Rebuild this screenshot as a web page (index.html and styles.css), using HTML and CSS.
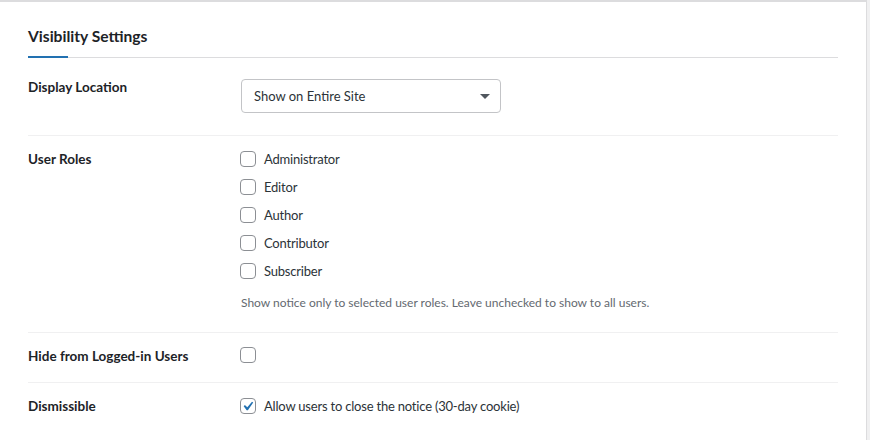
FILE: index.html
```html
<!DOCTYPE html>
<html lang="en">
<head>
<meta charset="utf-8">
<title>Visibility Settings</title>
<link rel="stylesheet" href="styles.css">
</head>
<body>
<div class="card">
  <h2 class="card-title">Visibility Settings</h2>

  <div class="row row-select">
    <div class="row-label">Display Location</div>
    <div class="row-field">
      <div class="select-wrap">
        <select class="select">
          <option>Show on Entire Site</option>
        </select>
      </div>
    </div>
  </div>

  <div class="row">
    <div class="row-label">User Roles</div>
    <div class="row-field">
      <div class="check-list">
        <label class="check"><input type="checkbox"><span class="box"></span>Administrator</label>
        <label class="check"><input type="checkbox"><span class="box"></span>Editor</label>
        <label class="check"><input type="checkbox"><span class="box"></span>Author</label>
        <label class="check"><input type="checkbox"><span class="box"></span>Contributor</label>
        <label class="check"><input type="checkbox"><span class="box"></span>Subscriber</label>
      </div>
      <p class="help">Show notice only to selected user roles. Leave unchecked to show to all users.</p>
    </div>
  </div>

  <div class="row">
    <div class="row-label">Hide from Logged-in Users</div>
    <div class="row-field">
      <label class="check solo"><input type="checkbox"><span class="box"></span></label>
    </div>
  </div>

  <div class="row">
    <div class="row-label">Dismissible</div>
    <div class="row-field">
      <label class="check"><input type="checkbox" checked><span class="box is-checked"><svg viewBox="2.86 1.9 15.24 15.24" width="14" height="14" aria-hidden="true"><path d="M14.83 4.89l1.34.94-5.81 8.38H9.02L5.78 9.67l1.34-1.25 2.57 2.4z" fill="#2271b1"/></svg></span>Allow users to close the notice (30-day cookie)</label>
    </div>
  </div>
</div>
</body>
</html>
```

FILE: styles.css
```css
html, body {
  margin: 0;
  padding: 0;
}

body {
  background: #f0f0f1;
  font-family: Lato, "Liberation Sans", sans-serif;
  font-size: 13px;
  color: #1d2327;
  height: 440px;
  overflow: hidden;
}

.card {
  background: #ffffff;
  margin-right: 3px;
  border-top: 2px solid #dcdcde;
  border-right: 1px solid #dcdcde;
  padding: 24px 28px 0 28px;
  height: 440px;
  box-sizing: border-box;
}

.card-title {
  position: relative;
  margin: 0;
  font-size: 15.6px;
  font-weight: 700;
  line-height: 21px;
  padding-bottom: 10px;
  border-bottom: 1px solid #dcdcde;
  color: #1d2327;
}

.card-title::after {
  content: "";
  position: absolute;
  left: 0;
  bottom: -1px;
  width: 40px;
  height: 2px;
  background: #2271b1;
}

.row {
  display: flex;
  padding: 14px 0 17px 0;
  border-bottom: 1px solid #f0f0f1;
}

.row:last-child {
  border-bottom: none;
}

.row-label {
  width: 212px;
  flex: none;
  font-size: 13.5px;
  font-weight: 700;
  line-height: 18px;
}

.row-select .row-label {
  padding-top: 6px;
}

.row-field {
  flex: 1;
  min-width: 0;
}

.select-wrap {
  position: relative;
  width: 260px;
  margin: 7px 0 5px 1px;
}

.select-wrap::after {
  content: "";
  position: absolute;
  right: 11px;
  top: 15px;
  width: 0;
  height: 0;
  border-left: 5px solid transparent;
  border-right: 5px solid transparent;
  border-top: 5px solid #50575e;
  pointer-events: none;
}

.select {
  display: block;
  width: 100%;
  height: 34px;
  box-sizing: border-box;
  -webkit-appearance: none;
  appearance: none;
  border: 1px solid #c3c4c7;
  border-radius: 4px;
  background: #ffffff;
  padding: 0 30px 0 12px;
  font-family: inherit;
  font-size: 13px;
  color: #2c3338;
}

.check-list {
  display: flex;
  flex-direction: column;
  gap: 10px;
}

.check {
  display: flex;
  align-items: center;
  line-height: 18px;
  height: 18px;
  color: #2c3338;
  letter-spacing: -0.2px;
}

.check input {
  display: none;
}

.box {
  flex: none;
  width: 16px;
  height: 16px;
  box-sizing: border-box;
  border: 1px solid #8c8f94;
  border-radius: 4px;
  background: #ffffff;
  margin-right: 8px;
  display: flex;
  align-items: center;
  justify-content: center;
}

.solo .box {
  margin-top: -2px;
}

.box svg {
  display: block;
}

.help {
  margin: 14px 0 3px 1px;
  line-height: 18px;
  font-size: 12px;
  color: #646970;
}
```
